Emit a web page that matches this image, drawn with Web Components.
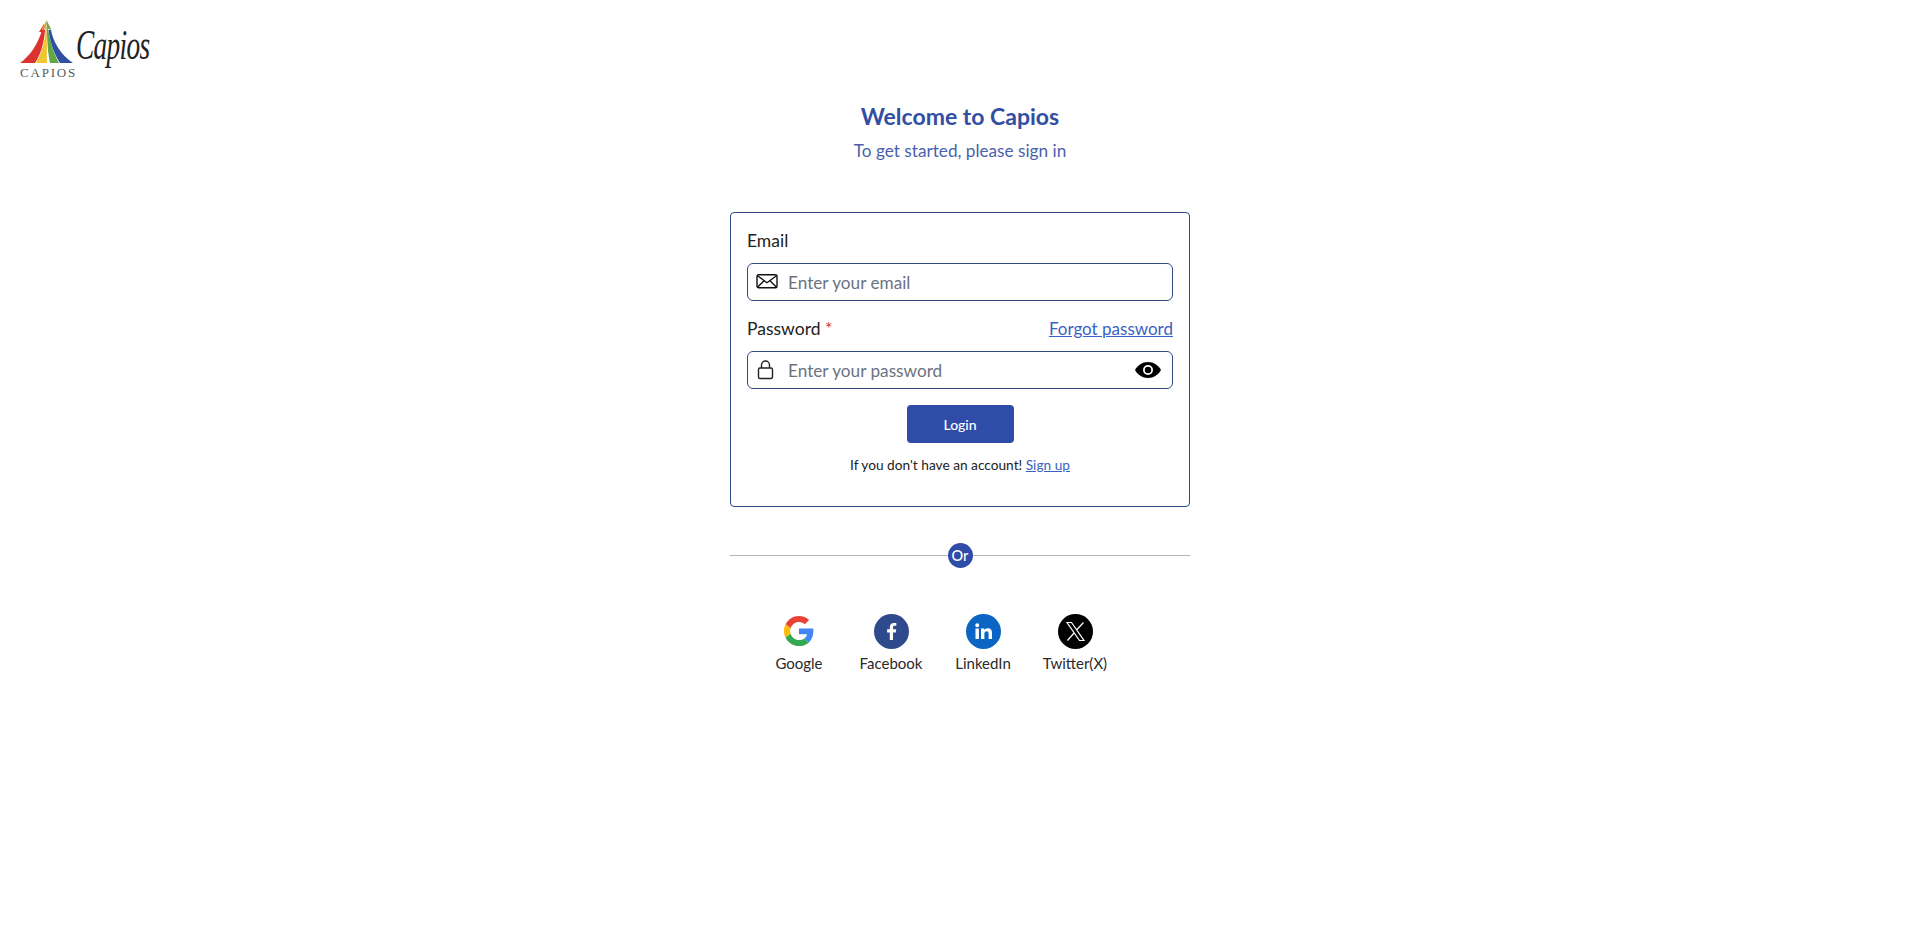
<!DOCTYPE html>
<html lang="en">
<head>
<meta charset="utf-8">
<title>Capios</title>
<style>
  html,body{margin:0;background:#fff}
  body{font-family:"Lato","Noto Sans",sans-serif;color:#1d1d1d}
</style>
</head>
<body>
<capios-page>
  <capios-logo slot="logo"></capios-logo>
  <login-card slot="card"></login-card>
  <or-divider slot="divider"></or-divider>
  <social-row slot="social"></social-row>
</capios-page>

<script>
const FONT = '"Lato","Noto Sans",sans-serif';

customElements.define('capios-page', class extends HTMLElement {
  constructor(){
    super();
    this.attachShadow({mode:'open'}).innerHTML = `
      <style>
        :host{display:flex;flex-direction:column;min-height:945px;font-family:${FONT}}
        header{box-sizing:border-box;padding:20px 0 0 20px;height:78px}
        main{display:flex;flex-direction:column;align-items:center}
        h1{margin:22px 0 0;font-size:23px;line-height:32px;font-weight:700;color:#324ea3}
        p{margin:7px 0 0;font-size:17.200px;line-height:24px;color:#4a62ab}
        .col{width:460px;margin-top:49px;display:flex;flex-direction:column}
      </style>
      <header><slot name="logo"></slot></header>
      <main>
        <h1>Welcome to Capios</h1>
        <p>To get started, please sign in</p>
        <div class="col">
          <slot name="card"></slot>
          <slot name="divider"></slot>
          <slot name="social"></slot>
        </div>
      </main>`;
  }
});

customElements.define('capios-logo', class extends HTMLElement {
  constructor(){
    super();
    this.attachShadow({mode:'open'}).innerHTML = `
      <style>
        :host{display:flex;align-items:flex-start;width:134px;height:58px}
        .mark{display:flex;flex-direction:column;align-items:flex-start;width:53px}
        svg{display:block}
        .small{font:13px/12px "Liberation Serif",serif;letter-spacing:1.800px;color:#5a5a5a;white-space:nowrap;margin:3px 0 0 0}
        .script{font:italic 42px/46px "Liberation Serif",serif;color:#222;margin:2px 0 0 3px;width:72px;white-space:nowrap;transform:scaleX(.65);transform-origin:left top;letter-spacing:-1px}
      </style>
      <div class="mark">
        <svg width="53" height="44" viewBox="0 0 53 44">
          <path d="M0 43C10 36 18 24 22 10L25 10C24 24 20 36 15 43Z" fill="#dd3330"/>
          <path d="M19 12L24 4L24.500 12Z" fill="#dd3330"/>
          <path d="M16 43C21 34 25 22 25.500 10L26.500 10C27 22 27 34 27 43Z" fill="#f3c434"/>
          <path d="M30 43C28 34 27 22 27 8L28 8C30 22 34 34 39 43Z" fill="#62a745"/>
          <path d="M28.500 10L31 10C33 22 41 35 53 43L40 43C34 34 30 22 28.500 10Z" fill="#2f4fa0"/>
          <path d="M26.500 0L21.500 10L25.500 8.500L26 20Z" fill="#e0a63a"/>
          <path d="M26.500 0L31.500 10L27.500 8.500L27 20Z" fill="#72a64a"/>
        </svg>
        <div class="small">CAPIOS</div>
      </div>
      <div class="script">Capios</div>`;
  }
});

customElements.define('text-field', class extends HTMLElement {
  constructor(){
    super();
    this.attachShadow({mode:'open'}).innerHTML = `
      <style>
        :host{display:block;font-family:${FONT}}
        .head{display:flex;justify-content:space-between;height:24px;line-height:24px;font-size:17.500px;color:#222}
        .req{color:#d0393e}
        .box{margin-top:10px;height:36px;border:1px solid #324a80;border-radius:6px;display:flex;align-items:center;padding:0 11px 0 8px;gap:10px}
        .ph{flex:1;font-size:17.200px;color:#6b7280}
      </style>
      <div class="head"><span><span id="lab"></span><span class="req" id="req"></span></span><slot name="aside"></slot></div>
      <div class="box"><slot name="icon"></slot><span class="ph" id="ph"></span><slot name="end"></slot></div>`;
  }
  connectedCallback(){
    const s = this.shadowRoot;
    s.getElementById('lab').textContent = this.getAttribute('label');
    s.getElementById('ph').textContent = this.getAttribute('placeholder');
    if(this.hasAttribute('required')) s.getElementById('req').textContent = ' *';
  }
});

customElements.define('login-card', class extends HTMLElement {
  constructor(){
    super();
    this.attachShadow({mode:'open'}).innerHTML = `
      <style>
        :host{display:block;font-family:${FONT}}
        .card{box-sizing:border-box;height:295px;border:1px solid #2d4a82;border-radius:4px;padding:16px 16px 0}
        text-field + text-field{margin-top:16px}
        a{color:#3a62c4}
        text-field a{font-size:17px}
        button{display:block;margin:16px auto 0;width:107px;height:38px;border:0;border-radius:4px;background:#2f4da8;color:#fff;font:500 14px ${FONT}}
        .foot{margin-top:12px;text-align:center;font-size:13.700px;line-height:20px;color:#222}
      </style>
      <div class="card">
        <text-field label="Email" placeholder="Enter your email">
          <svg slot="icon" width="22" height="16" viewBox="0 0 22 16" fill="none" stroke="#111" stroke-width="1.400"><rect x="1" y="0.700" width="20" height="13" rx="1.500"/><path d="M1.500 1.700L11 8.700L20.500 1.700M1.500 13.200L8 6.700M20.500 13.200L14 6.700"/></svg>
        </text-field>
        <text-field label="Password" placeholder="Enter your password" required>
          <a slot="aside" href="#">Forgot password</a>
          <svg slot="icon" width="22" height="20" viewBox="0 0 22 20" fill="none" stroke="#222" stroke-width="1.400"><rect x="2.500" y="8" width="14" height="10.500" rx="1.500"/><path d="M5.500 8V5a4 4 0 0 1 8 0V8"/></svg>
          <svg slot="end" width="26" height="16" viewBox="0 0 26 16"><path d="M13 0C7.500 0 2.500 3.300 0 8c2.500 4.700 7.500 8 13 8s10.500-3.300 13-8c-2.500-4.700-7.500-8-13-8z" fill="#000"/><circle cx="13" cy="8" r="5" fill="#fff"/><circle cx="13" cy="8" r="3.200" fill="#000"/></svg>
        </text-field>
        <button>Login</button>
        <div class="foot">If you don't have an account! <a href="#">Sign up</a></div>
      </div>`;
  }
});

customElements.define('or-divider', class extends HTMLElement {
  constructor(){
    super();
    this.attachShadow({mode:'open'}).innerHTML = `
      <style>
        :host{display:flex;align-items:center;margin-top:36px;font-family:${FONT}}
        i{flex:1;height:1px;background:#b5b5b5}
        b{width:25px;height:25px;border-radius:50%;background:#2f4da8;color:#fff;font-size:14.500px;font-weight:500;display:grid;place-items:center}
      </style>
      <i></i><b>Or</b><i></i>`;
  }
});

customElements.define('social-item', class extends HTMLElement {
  constructor(){
    super();
    this.attachShadow({mode:'open'}).innerHTML = `
      <style>
        :host{display:flex;flex-direction:column;align-items:center;width:92px;font-family:${FONT}}
        .ic{height:36px;display:grid;place-items:center}
        .t{margin-top:4px;font-size:15px;line-height:20px;color:#2a2a2a}
      </style>
      <div class="ic"><slot></slot></div><div class="t"><span id="t"></span></div>`;
  }
  connectedCallback(){ this.shadowRoot.getElementById('t').textContent = this.getAttribute('label'); }
});

customElements.define('social-row', class extends HTMLElement {
  constructor(){
    super();
    this.attachShadow({mode:'open'}).innerHTML = `
      <style>
        :host{display:flex;justify-content:center;margin-top:45px;padding-right:46px}
      </style>
      <social-item label="Google">
        <svg width="30" height="30" viewBox="0 0 48 48">
          <path fill="#EA4335" d="M24 9.500c3.500 0 6.700 1.200 9.200 3.600l6.900-6.900C35.900 2.400 30.500 0 24 0 14.600 0 6.500 5.400 2.600 13.200l8 6.200C12.400 13.700 17.700 9.500 24 9.500z"/>
          <path fill="#4285F4" d="M47 24.500c0-1.600-.1-3.100-.4-4.500H24v9h12.900c-.6 3-2.200 5.500-4.700 7.200l7.700 6C44.400 37.900 47 31.800 47 24.500z"/>
          <path fill="#FBBC05" d="M10.500 28.600c-.5-1.500-.8-3-.8-4.600s.3-3.200.8-4.600l-8-6.200C.9 16.500 0 20.100 0 24s.9 7.500 2.600 10.800l7.900-6.200z"/>
          <path fill="#34A853" d="M24 48c6.500 0 11.900-2.100 15.900-5.800l-7.700-6c-2.200 1.500-4.900 2.300-8.200 2.300-6.300 0-11.600-4.200-13.500-10l-8 6.200C6.500 42.600 14.600 48 24 48z"/>
        </svg>
      </social-item>
      <social-item label="Facebook">
        <svg width="35" height="35" viewBox="0 0 35 35"><circle cx="17.500" cy="17.500" r="17.500" fill="#2f4a8c"/><path fill="#fff" d="M19 26v-7.600h2.800l.4-3.100H19v-2c0-.9.300-1.500 1.600-1.500h1.700V9.100c-.3 0-1.300-.1-2.400-.1-2.500 0-4.100 1.500-4.100 4.200v2.100h-2.700v3.100h2.700V26z"/></svg>
      </social-item>
      <social-item label="LinkedIn">
        <svg width="35" height="35" viewBox="0 0 35 35"><circle cx="17.500" cy="17.500" r="17.500" fill="#0a66c2"/><path fill="#fff" d="M9.500 14.500h3.400V25H9.500zM11.200 9.300a2 2 0 1 1 0 4 2 2 0 0 1 0-4zM15 14.500h3.200V16c.6-1 1.900-1.800 3.600-1.800 3.600 0 4.200 2.300 4.200 5.300V25h-3.400v-4.900c0-1.300 0-2.900-1.800-2.900s-2.400 1.400-2.400 2.800v5H15z"/></svg>
      </social-item>
      <social-item label="Twitter(X)">
        <svg width="35" height="35" viewBox="0 0 35 35"><circle cx="17.500" cy="17.500" r="17.500" fill="#000"/><path fill="none" stroke="#fff" stroke-width="1.200" d="M9 8.500h4.500L26 26.500h-4.500zM25.500 8.500L18.500 16M16 19L9.500 26.500"/></svg>
      </social-item>`;
  }
});
</script>
</body>
</html>
